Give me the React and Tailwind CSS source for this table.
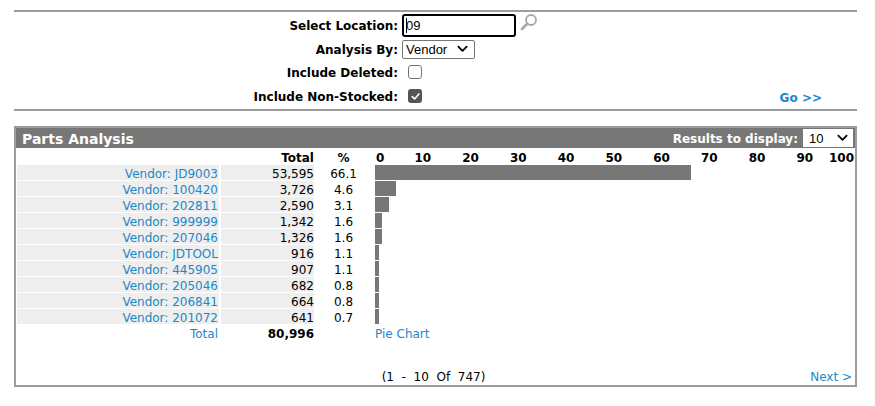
import React from "react";

const rows = [
  ["JD9003", "53,595", "66.1", 316],
  ["100420", "3,726", "4.6", 21],
  ["202811", "2,590", "3.1", 14],
  ["999999", "1,342", "1.6", 7],
  ["207046", "1,326", "1.6", 7],
  ["JDTOOL", "916", "1.1", 4],
  ["445905", "907", "1.1", 4],
  ["205046", "682", "0.8", 4],
  ["206841", "664", "0.8", 4],
  ["201072", "641", "0.7", 4],
];

const ticks = [0, 10, 20, 30, 40, 50, 60, 70, 80, 90, 100];

function Chevron({ className = "" }) {
  return (
    <svg viewBox="0 0 12 8" className={className} fill="none">
      <path d="M1.5 1.5 L6 6 L10.5 1.5" stroke="black" strokeWidth="2" strokeLinecap="round" strokeLinejoin="round" />
    </svg>
  );
}

function Search() {
  return (
    <svg viewBox="0 0 18 18" className="w-[18px] h-[18px] ml-[4px] -mt-[6px]" fill="none">
      <circle cx="11" cy="7" r="5" stroke="#a8a8a8" strokeWidth="1.8" />
      <line x1="7.2" y1="10.8" x2="2" y2="16" stroke="#a8a8a8" strokeWidth="2.8" strokeLinecap="round" />
    </svg>
  );
}

export default function App() {
  return (
    <div className="w-[875px] h-[406px] bg-white text-black text-[12px] leading-none font-['DejaVu_Sans',Verdana,sans-serif]">
      <div className="ml-[14px] w-[843px] pt-[10px]">
        <div className="border-t-2 border-[#9c9c9c]" />
        {/* form */}
        <div className="flex flex-col">
          <div className="flex items-center h-[26px]">
            <div className="w-[384px] text-right font-bold pt-[2px]">Select Location:</div>
            <div className="ml-[4px] flex items-center">
              <div className="w-[114px] h-[23px] border-2 border-black rounded-[3px] flex items-center pl-[2px] pt-[1px] font-['Liberation_Sans',Arial,sans-serif] text-[13px]">
                <span className="relative">
                  <span className="absolute left-0 top-[-1px] h-[15px] border-l border-black" />
                  09
                </span>
              </div>
              <Search />
            </div>
          </div>
          <div className="flex items-center h-[22px]">
            <div className="w-[384px] text-right font-bold pt-[2px]">Analysis By:</div>
            <div className="ml-[4px] w-[73px] h-[19px] border border-[#767676] rounded-[2px] flex items-center justify-between pl-[3px] pr-[6px] font-['Liberation_Sans',Arial,sans-serif] text-[13px]">
              <span>Vendor</span>
              <Chevron className="w-[11px] h-[8px]" />
            </div>
          </div>
          <div className="flex items-center h-[24px]">
            <div className="w-[384px] text-right font-bold pt-[2px]">Include Deleted:</div>
            <div className="ml-[10px] w-[14px] h-[14px] border border-[#767676] rounded-[3px] bg-white" />
          </div>
          <div className="flex items-center h-[24px]">
            <div className="w-[384px] text-right font-bold pt-[2px]">Include Non-Stocked:</div>
            <div className="ml-[10px] w-[14px] h-[14px] rounded-[3px] bg-[#555] flex items-center justify-center">
              <svg viewBox="0 0 12 12" className="w-[11px] h-[11px]" fill="none">
                <path d="M2.5 6.2 L5 8.7 L9.7 3.2" stroke="white" strokeWidth="1.8" strokeLinecap="round" strokeLinejoin="round" />
              </svg>
            </div>
            <div className="flex-1 flex justify-end pr-[35px] pt-[4px]">
              <span className="font-bold text-[#1e88c8]">Go &gt;&gt;</span>
            </div>
          </div>
        </div>
        <div className="mt-[1px] border-t-2 border-[#9c9c9c]" />

        {/* panel */}
        <div className="mt-[15px] h-[261px] border-2 border-[#9c9c9c] flex flex-col">
          <div className="h-[20px] bg-[#777] flex items-center justify-between pl-[6px] pr-[2px]">
            <span className="text-white font-bold text-[14px] pt-[1px]">Parts Analysis</span>
            <div className="flex items-center">
              <span className="text-white font-bold pt-[1px]">Results to display:</span>
              <div className="ml-[5px] w-[50px] h-[18px] bg-white flex items-center justify-between pl-[6px] pr-[5px] font-['Liberation_Sans',Arial,sans-serif] text-[13px]">
                <span>10</span>
                <Chevron className="w-[11px] h-[8px]" />
              </div>
            </div>
          </div>

          {/* header row */}
          <div className="flex h-[17px] items-center pt-[2px]">
            <div className="ml-[1px] w-[202px]" />
            <div className="ml-[2px] w-[93px] text-right font-bold">Total</div>
            <div className="w-[59px] text-center font-bold">%</div>
            <div className="ml-[2px] relative w-[478px] h-full font-bold">
              {ticks.map((t, i) => {
                if (i === 0) return <span key={t} className="absolute left-[1px] top-[2px]">0</span>;
                if (t === 100) return <span key={t} className="absolute right-[-1px] top-[2px]">100</span>;
                return (
                  <span key={t} className="absolute top-[2px] -translate-x-1/2" style={{ left: `${i * 47.75}px` }}>
                    {t}
                  </span>
                );
              })}
            </div>
          </div>

          {/* data rows */}
          <div className="flex flex-col gap-px">
            {rows.map(([v, total, pct, w]) => (
              <div key={v} className="flex h-[15px]">
                <div className="ml-[1px] w-[202px] bg-[#eeeeee] flex items-center justify-end pr-[1px] pt-[2px] text-[#1e88c8]">
                  Vendor: {v}
                </div>
                <div className="ml-[2px] w-[93px] bg-[#eeeeee] flex items-center justify-end pt-[2px]">{total}</div>
                <div className="w-[59px] flex items-center justify-center pt-[2px]">{pct}</div>
                <div className="ml-[2px] w-[478px] flex items-center">
                  <div className="h-[15px] bg-[#777]" style={{ width: `${w}px` }} />
                </div>
              </div>
            ))}
          </div>

          {/* total row */}
          <div className="flex h-[16px] items-center mt-px pt-[2px]">
            <div className="ml-[1px] w-[202px] text-right pr-[1px] text-[#1e88c8]">Total</div>
            <div className="ml-[2px] w-[93px] text-right font-bold">80,996</div>
            <div className="w-[59px]" />
            <div className="ml-[2px] text-[#1e88c8]">Pie Chart</div>
          </div>

          <div className="flex-1" />

          {/* pagination */}
          <div className="grid grid-cols-[1fr_auto_1fr] items-center h-[16px] mb-[1px] pt-[2px]">
            <div />
            <div className="whitespace-pre pr-[4px]">(1  -  10  Of  747)</div>
            <div className="flex justify-end pr-[3px] text-[#1e88c8]">Next &gt;</div>
          </div>
        </div>
      </div>
    </div>
  );
}
